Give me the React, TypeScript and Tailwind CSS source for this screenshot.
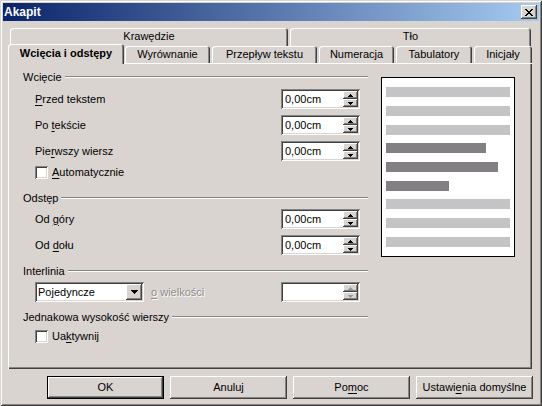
import type { ReactNode } from "react";

// Classic 3D edges, reused across fields and buttons.
const raised =
  "shadow-[inset_-1px_-1px_#404040,inset_1px_1px_#ffffff,inset_-2px_-2px_#848484,inset_2px_2px_#dad4d0]";
const sunken =
  "shadow-[inset_1px_1px_#848484,inset_-1px_-1px_#ffffff,inset_2px_2px_#404040,inset_-2px_-2px_#dad4d0]";
const smallRaised =
  "shadow-[inset_-1px_-1px_#404040,inset_1px_1px_#ffffff,inset_-2px_-2px_#848484]";

function Acc({ children }: { children: ReactNode }) {
  return <u className="underline-offset-[2px]">{children}</u>;
}

function Arrow({ up, disabled }: { up?: boolean; disabled?: boolean }) {
  const fill = disabled ? "#9a9a9a" : "#000000";
  return (
    <svg width="5" height="3" viewBox="0 0 5 3" shapeRendering="crispEdges">
      {up ? (
        <>
          <rect x="2" y="0" width="1" height="1" fill={fill} />
          <rect x="1" y="1" width="3" height="1" fill={fill} />
          <rect x="0" y="2" width="5" height="1" fill={fill} />
        </>
      ) : (
        <>
          <rect x="0" y="0" width="5" height="1" fill={fill} />
          <rect x="1" y="1" width="3" height="1" fill={fill} />
          <rect x="2" y="2" width="1" height="1" fill={fill} />
        </>
      )}
    </svg>
  );
}

function SpinField({ value, disabled }: { value?: string; disabled?: boolean }) {
  return (
    <div className={`flex h-[20px] w-[79px] bg-white p-[2px] ${sunken}`}>
      <div className="flex-1 pl-[2px] leading-[16px]">{value}</div>
      <div className="flex w-[15px] flex-col">
        <div className={`flex h-[8px] items-center justify-center bg-[#dad4d0] ${smallRaised}`}>
          <Arrow up disabled={disabled} />
        </div>
        <div className={`flex h-[8px] items-center justify-center bg-[#dad4d0] ${smallRaised}`}>
          <Arrow disabled={disabled} />
        </div>
      </div>
    </div>
  );
}

function Checkbox({ children }: { children: ReactNode }) {
  return (
    <div className="flex h-[13px] items-center gap-[4px] pl-[12px]">
      <div className={`h-[13px] w-[13px] bg-white ${sunken}`} />
      <span>{children}</span>
    </div>
  );
}

function Heading({ children, className }: { children: ReactNode; className: string }) {
  return (
    <div className={`flex h-[14px] items-center gap-[3px] ${className}`}>
      <span>{children}</span>
      <div className="h-0 flex-1 border-t border-b border-t-[#848484] border-b-white" />
    </div>
  );
}

function Row({ label, className }: { label: ReactNode; className: string }) {
  return (
    <div className={`flex h-[20px] items-center justify-between pl-[12px] pr-[8px] ${className}`}>
      <span>{label}</span>
      <SpinField value="0,00cm" />
    </div>
  );
}

function CloseGlyph() {
  const px = [
    "XX....XX",
    ".XX..XX.",
    "..XXXX..",
    "...XX...",
    "..XXXX..",
    ".XX..XX.",
    "XX....XX",
  ];
  return (
    <svg width="8" height="7" viewBox="0 0 8 7" shapeRendering="crispEdges">
      {px.flatMap((row, y) =>
        row.split("").map((c, x) =>
          c === "X" ? <rect key={`${x}-${y}`} x={x} y={y} width="1" height="1" fill="#000" /> : null,
        ),
      )}
    </svg>
  );
}

const tabEdge =
  "rounded-t-[3px] bg-[#dad4d0] shadow-[inset_1px_1px_#ffffff,inset_-1px_0_#404040,inset_-2px_0_#848484]";

export default function App() {
  return (
    <div
      className={`h-[406px] w-[542px] overflow-hidden bg-[#dad4d0] p-[3px] font-['Liberation_Sans',Arial,sans-serif] text-[11px] leading-none text-black shadow-[inset_1px_1px_#dad4d0,inset_-1px_-1px_#404040,inset_2px_2px_#ffffff,inset_-2px_-2px_#848484]`}
    >
      {/* title bar */}
      <div className="flex h-[18px] items-center justify-between bg-[linear-gradient(to_right,#0a246a,#a6caf0)] pl-[1px] pr-[2px]">
        <span className="text-[12px] font-bold text-white">Akapit</span>
        <div className={`flex h-[14px] w-[16px] items-center justify-center bg-[#dad4d0] ${raised}`}>
          <CloseGlyph />
        </div>
      </div>

      {/* back tab row */}
      <div className="ml-[7px] mt-[7px] flex h-[18px] gap-[2px]">
        <div className={`flex w-[278px] items-center justify-center pb-[1px] ${tabEdge}`}>
          Krawędzie
        </div>
        <div className={`flex w-[241px] items-center justify-center pb-[1px] ${tabEdge}`}>
          Tło
        </div>
      </div>

      {/* front tab row */}
      <div className="ml-[5px] flex h-[17px] items-end">
        <div
          className={`relative z-10 mb-[-1px] flex h-[20px] w-[116px] items-center justify-center pb-[2px] font-bold ${tabEdge}`}
        >
          Wcięcia i odstępy
        </div>
        <div className="ml-[1px] flex h-[17px] gap-[2px]">
          <div className={`flex w-[85px] items-center justify-center ${tabEdge}`}>Wyrównanie</div>
          <div className={`flex w-[105px] items-center justify-center ${tabEdge}`}>Przepływ tekstu</div>
          <div className={`flex w-[75px] items-center justify-center ${tabEdge}`}>Numeracja</div>
          <div className={`flex w-[76px] items-center justify-center ${tabEdge}`}>Tabulatory</div>
          <div className={`flex w-[58px] items-center justify-center ${tabEdge}`}>Inicjały</div>
        </div>
      </div>

      {/* tab page */}
      <div className="ml-[5px] flex h-[306px] w-[524px] pt-[1px] shadow-[inset_1px_1px_#ffffff,inset_-1px_-1px_#404040,inset_-2px_-2px_#848484]">
        <div className="ml-[15px] flex w-[345px] flex-col">
          <Heading className="mt-[6px]">Wcięcie</Heading>
          <Row
            className="mt-[5px]"
            label={
              <>
                <Acc>P</Acc>rzed tekstem
              </>
            }
          />
          <Row
            className="mt-[6px]"
            label={
              <>
                Po <Acc>t</Acc>ekście
              </>
            }
          />
          <Row
            className="mt-[6px]"
            label={
              <>
                Pie<Acc>r</Acc>wszy wiersz
              </>
            }
          />
          <div className="mt-[5px]">
            <Checkbox>
              <Acc>A</Acc>utomatycznie
            </Checkbox>
          </div>

          <Heading className="mt-[12px]">Odstęp</Heading>
          <Row
            className="mt-[4px]"
            label={
              <>
                Od <Acc>g</Acc>óry
              </>
            }
          />
          <Row
            className="mt-[6px]"
            label={
              <>
                Od <Acc>d</Acc>ołu
              </>
            }
          />

          <Heading className="mt-[9px]">Interlinia</Heading>
          <div className="mt-[4px] flex h-[20px] items-center pl-[12px] pr-[8px]">
            <div className={`flex h-[20px] w-[109px] bg-white p-[2px] ${sunken}`}>
              <div className="flex-1 pl-[1px] leading-[16px]">Pojedyncze</div>
              <div className={`flex h-[16px] w-[16px] items-center justify-center bg-[#dad4d0] ${raised}`}>
                <svg width="7" height="4" viewBox="0 0 7 4" shapeRendering="crispEdges">
                  <rect x="0" y="0" width="7" height="1" fill="#000" />
                  <rect x="1" y="1" width="5" height="1" fill="#000" />
                  <rect x="2" y="2" width="3" height="1" fill="#000" />
                  <rect x="3" y="3" width="1" height="1" fill="#000" />
                </svg>
              </div>
            </div>
            <span className="ml-[7px] text-[#8c8c8c] [text-shadow:1px_1px_#ffffff]">
              <Acc>o</Acc> wielkości
            </span>
            <div className="ml-auto">
              <SpinField disabled />
            </div>
          </div>

          <Heading className="mt-[8px]">Jednakowa wysokość wierszy</Heading>
          <div className="mt-[6px]">
            <Checkbox>
              Ua<Acc>k</Acc>tywnij
            </Checkbox>
          </div>
        </div>

        {/* preview */}
        <div className="ml-[13px] mt-[13px] flex h-[180px] w-[134px] flex-col border border-black bg-white pl-[4px]">
          <div className="mt-[9px] h-[10px] w-[124px] bg-[#c4c3c5]" />
          <div className="mt-[9px] h-[10px] w-[124px] bg-[#c4c3c5]" />
          <div className="mt-[9px] h-[10px] w-[124px] bg-[#c4c3c5]" />
          <div className="mt-[8px] h-[10px] w-[100px] bg-[#828083]" />
          <div className="mt-[9px] h-[10px] w-[112px] bg-[#828083]" />
          <div className="mt-[9px] h-[10px] w-[63px] bg-[#828083]" />
          <div className="mt-[8px] h-[10px] w-[124px] bg-[#c4c3c5]" />
          <div className="mt-[9px] h-[10px] w-[124px] bg-[#c4c3c5]" />
          <div className="mt-[9px] h-[10px] w-[124px] bg-[#c4c3c5]" />
        </div>
      </div>

      {/* dialog buttons */}
      <div className="ml-[44px] mt-[7px] flex gap-[6px]">
        <div className="h-[23px] w-[117px] border border-black">
          <div className={`flex h-full items-center justify-center ${raised}`}>OK</div>
        </div>
        <div className={`flex h-[23px] w-[117px] items-center justify-center ${raised}`}>Anuluj</div>
        <div className={`flex h-[23px] w-[117px] items-center justify-center ${raised}`}>
          Po<Acc>m</Acc>oc
        </div>
        <div className={`flex h-[23px] w-[117px] items-center justify-center ${raised}`}>
          Ustawi<Acc>e</Acc>nia domyślne
        </div>
      </div>
    </div>
  );
}
